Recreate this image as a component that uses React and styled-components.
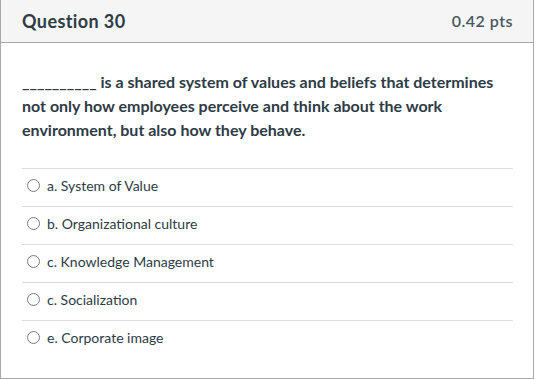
import React from "react";
import styled, { createGlobalStyle } from "styled-components";

const GlobalStyle = createGlobalStyle`
  body {
    margin: 0;
    background: #ffffff;
    font-family: Lato, "Liberation Sans", sans-serif;
    color: #2d3b45;
  }
`;

const answers = [
  "a. System of Value",
  "b. Organizational culture",
  "c. Knowledge Management",
  "c. Socialization",
  "e. Corporate image",
];

export default function App() {
  return (
    <>
      <GlobalStyle />
      <QuestionCard>
        <Header>
          <Title>Question 30</Title>
          <Points>0.42 pts</Points>
        </Header>
        <Body>
          <QuestionText>
            __________ is a shared system of values and beliefs that determines
            not only how employees perceive and think about the work
            environment, but also how they behave.
          </QuestionText>
          <Answers>
            {answers.map((a) => (
              <AnswerRow key={a}>
                <Radio />
                <AnswerLabel>{a}</AnswerLabel>
              </AnswerRow>
            ))}
          </Answers>
        </Body>
      </QuestionCard>
    </>
  );
}

const QuestionCard = styled.div`
  width: 532px;
  border: 1px solid #a8a8a8;
  border-top: 0;
  background: #ffffff;
`;

const Header = styled.div`
  display: flex;
  align-items: center;
  justify-content: space-between;
  height: 43px;
  padding: 0 20px 0 21px;
  background: #f5f5f5;
  border-bottom: 1px solid #a8a8a8;
  box-sizing: border-box;
`;

const Title = styled.h2`
  margin: 0;
  font-size: 18px;
  font-weight: 700;
  letter-spacing: 0.4px;
  color: #2d3b45;
  padding-bottom: 1px;
`;

const Points = styled.span`
  font-size: 16px;
  font-weight: 600;
  letter-spacing: 0.5px;
  color: #4a5762;
  padding-bottom: 1px;
`;

const Body = styled.div`
  padding: 27px 20px 20px 21px;
`;

const QuestionText = styled.p`
  margin: 0 0 26px;
  font-size: 16px;
  font-weight: 700;
  line-height: 24px;
  color: #2d3b45;
`;

const Answers = styled.div`
  display: flex;
  flex-direction: column;
`;

const AnswerRow = styled.label`
  display: flex;
  align-items: center;
  gap: 7px;
  height: 38px;
  padding: 0 0 4px 5px;
  border-top: 1px solid #dcdcdc;
  box-sizing: border-box;
`;

const Radio = styled.span`
  width: 11px;
  height: 11px;
  border: 1px solid #7a7a7a;
  border-radius: 50%;
  flex-shrink: 0;
`;

const AnswerLabel = styled.span`
  font-size: 14px;
  line-height: 18px;
  color: #2d3b45;
`;
